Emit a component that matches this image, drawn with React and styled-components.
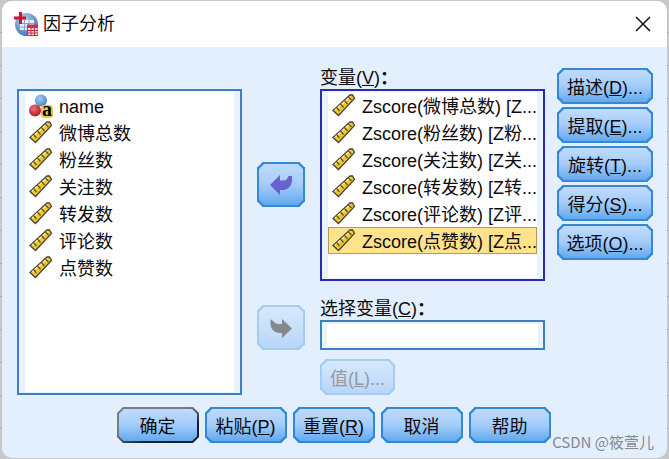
import { useState } from "react";
import styled, { createGlobalStyle } from "styled-components";

const GlobalStyle = createGlobalStyle`
  * {
    box-sizing: border-box;
  }

  body {
    margin: 0;
    background-color: #c6c8cb;
    font-family: "Liberation Sans", "Noto Sans CJK SC", sans-serif;
    font-size: 18px;
    line-height: 22px;
    color: #0b0b10;
  }
`;

const Page = styled.div`
  padding: 1px 2px;
  background: repeating-linear-gradient(#c6c8cb 0 32px, #a9acb3 32px 33px);
`;

const Dialog = styled.section`
  position: relative;
  background-color: #e3effc;
  border-radius: 10px;
  overflow: hidden;
`;

const TitleBar = styled.header`
  display: flex;
  align-items: center;
  gap: 5px;
  height: 46px;
  padding: 0 12px;
  background-color: white;

  h1 {
    flex: 1;
    margin: 0;
    font-size: 18px;
    font-weight: normal;
  }
`;

const CloseButton = styled.button`
  display: flex;
  padding: 4px;
  border: none;
  background: transparent;
  cursor: pointer;
`;

const Content = styled.div`
  display: grid;
  grid-template-columns: minmax(0, 1fr) 78px minmax(0, 1fr) 108px;
  padding: 20px 14px 0 15px;
`;

const Column = styled.div`
  display: flex;
  flex-direction: column;
`;

const SourceColumn = styled(Column)`
  padding-top: 22px;
`;

const TransferColumn = styled(Column)`
  gap: 98px;
  padding: 95px 15px 0;
`;

const OptionsColumn = styled(Column)`
  gap: 3px;
  padding: 1px 0 0 12px;
`;

const FieldLabel = styled.label`
  display: block;
  height: 22px;
  line-height: 22px;
`;

const ListBox = styled.ul`
  flex: ${(props) => (props.$fill ? 1 : "none")};
  min-height: 192px;
  margin: 0;
  padding: 1px 6px;
  list-style: none;
  border: 2px solid ${(props) => (props.$focused ? "#2a2cab" : "#3b7fc4")};
  background: linear-gradient(white, white) content-box, #e9f3fe;
  outline: none;
`;

const ListItem = styled.li`
  display: flex;
  align-items: center;
  gap: 6px;
  height: 27px;
  padding: 0 2px 0 3px;
  border: 1px solid ${(props) => (props.$selected ? "#b39b55" : "transparent")};
  background-color: ${(props) => (props.$selected ? "#ffe28c" : "transparent")};
  white-space: nowrap;
  cursor: default;

  svg {
    flex: none;
    overflow: visible;
  }

  span {
    padding-top: 2px;
  }
`;

const TextField = styled.input`
  width: 100%;
  height: 30px;
  padding: 2px 5px;
  border: 2px solid #3b7fc4;
  border-radius: 0;
  background: linear-gradient(white, white) content-box, #e9f3fe;
  font: inherit;
  outline: none;
`;

const Button = styled.button`
  display: flex;
  justify-content: center;
  align-items: center;
  height: 36px;
  padding: 3px 0 0;
  border: 2px solid #3388d8;
  border-radius: 6px;
  corner-shape: bevel;
  background: linear-gradient(#c0dcfd, #a4ccfa 50%, #62a9ee);
  color: inherit;
  font: inherit;
  white-space: nowrap;
  cursor: pointer;

  &:disabled {
    border-color: #a3cdf3;
    background: linear-gradient(#d5e7fc, #c9e0fb 50%, #b7d6f8);
    color: #96999f;
    cursor: default;
  }
`;

const ArrowButton = styled(Button)`
  height: 45px;
  padding: 0;
`;

const DefaultButton = styled(Button)`
  border-color: transparent;
  background: linear-gradient(#c0dcfd, #a4ccfa 50%, #62a9ee) padding-box,
    linear-gradient(160deg, #777b82 40%, #0d2034 70%) border-box;
`;

const ValueButton = styled(Button)`
  width: 75px;
  margin-top: 9px;
`;

const FilterField = styled.div`
  margin-top: 17px;
`;

const Footer = styled.footer`
  display: grid;
  grid-template-columns: repeat(5, 82px);
  justify-content: center;
  gap: 6px;
  padding: 12px 2px 15px 0;
`;

const Watermark = styled.span`
  position: absolute;
  right: 13px;
  bottom: 5px;
  font-family: "Noto Sans CJK SC", sans-serif;
  font-size: 15px;
  color: #85898f;
`;

function AppIcon() {
  return (
    <svg width="24" height="24" viewBox="0 0 24 24" aria-hidden="true">
      <defs>
        <radialGradient id="globe" cx="0.4" cy="0.3" r="0.75">
          <stop offset="0" stopColor="#b9d5ee" />
          <stop offset="1" stopColor="#3d72ad" />
        </radialGradient>
      </defs>
      <circle cx="12.5" cy="12.5" r="11.5" fill="url(#globe)" />
      <path d="M6 8h14v10H6z" fill="#e6f0f9" />
      <path
        d="M6 11.5h14M6 15h14M10.5 8v10M15 8v10"
        stroke="#7fa8d0"
        fill="none"
      />
      <path d="M5 0h3v4.500h4v3H8V12H5V7.500H0v-3h5z" fill="#d3122d" />
      <path d="M13 12.500h11V24H13z" fill="#cb3147" />
      <path
        d="M14 16h2.500v2H14zM17.500 16H20v2h-2.500zM21 16h2.500v2H21zM14 19h2.500v1.500H14zM17.500 19H20v1.500h-2.500zM21 19h2.500v1.500H21zM14 21.500h2.500V23H14zM17.500 21.500H20V23h-2.500zM21 21.500h2.500V23H21z"
        fill="#f7d5d9"
      />
    </svg>
  );
}

// Continuous (scale) variable
function RulerIcon() {
  return (
    <svg width="24" height="24" viewBox="0 0 24 24" aria-hidden="true">
      <path
        d="M1 16.500 18 1h2.500l2 3.500L6.500 21.500z"
        fill="#efc62f"
        stroke="#44443a"
        strokeWidth="1.300"
      />
      <path d="M3 16 18.500 2.500" stroke="#fff0a0" strokeWidth="1.200" />
      <path
        d="M4.500 13.500l3 3.500M8.500 10l3 3.500M12.500 6.500l3 3.500M16.500 3l3 3"
        stroke="#5b5220"
        strokeWidth="1.200"
      />
    </svg>
  );
}

// Nominal string variable
function NominalIcon() {
  return (
    <svg width="24" height="24" viewBox="0 0 24 24" aria-hidden="true">
      <defs>
        <radialGradient id="blueBall" cx="0.4" cy="0.35" r="0.65">
          <stop offset="0" stopColor="#a5cbf3" />
          <stop offset="1" stopColor="#4c86c9" />
        </radialGradient>
        <radialGradient id="redBall" cx="0.4" cy="0.35" r="0.65">
          <stop offset="0" stopColor="#ef7278" />
          <stop offset="1" stopColor="#b51624" />
        </radialGradient>
      </defs>
      <circle cx="12" cy="6.500" r="6" fill="url(#blueBall)" />
      <circle cx="6" cy="16.500" r="6" fill="url(#redBall)" />
      <path d="M14 11h8l2 2v9l-2 2h-8l-2-2v-9z" fill="#f2cb3c" />
      <text
        x="18"
        y="22"
        textAnchor="middle"
        fontFamily="Liberation Serif, serif"
        fontSize="20"
        fontWeight="bold"
        fill="#000"
      >
        a
      </text>
    </svg>
  );
}

function BackArrow() {
  return (
    <svg width="22" height="20" viewBox="0 0 22 20" aria-hidden="true">
      <path
        d="M0 10 10 0v5.500h3.500c3 0 4-2 5-4.500H22v4c0 6-4.500 10-9.500 10H10v5z"
        fill="#6a61cf"
      />
    </svg>
  );
}

function ForwardArrow() {
  return (
    <svg width="22" height="20" viewBox="0 0 22 20" aria-hidden="true">
      <path
        d="M22 10.500 12 20v-5H9.500C4.500 15 .5 11 .5 5.500V1.500c3 .5 4 4.500 7.500 4.500h4V1z"
        fill="#85888c"
      />
    </svg>
  );
}

const sourceVariables = [
  { name: "name", nominal: true },
  { name: "微博总数" },
  { name: "粉丝数" },
  { name: "关注数" },
  { name: "转发数" },
  { name: "评论数" },
  { name: "点赞数" },
];

const targetVariables = [
  "Zscore(微博总数) [Z...",
  "Zscore(粉丝数) [Z粉...",
  "Zscore(关注数) [Z关...",
  "Zscore(转发数) [Z转...",
  "Zscore(评论数) [Z评...",
  "Zscore(点赞数) [Z点...",
];

const optionButtons = [
  { text: "描述", shortcut: "D" },
  { text: "提取", shortcut: "E" },
  { text: "旋转", shortcut: "T" },
  { text: "得分", shortcut: "S" },
  { text: "选项", shortcut: "O" },
];

function App() {
  const [selected, setSelected] = useState(5);
  const [filter, setFilter] = useState("");

  return (
    <Page>
      <GlobalStyle />
      <Dialog role="dialog" aria-labelledby="dialogTitle">
        <TitleBar>
          <AppIcon />
          <h1 id="dialogTitle">因子分析</h1>
          <CloseButton type="button" aria-label="关闭">
            <svg width="16" height="16" viewBox="0 0 16 16">
              <path
                d="M1 1l14 14M15 1 1 15"
                stroke="#111"
                strokeWidth="1.500"
                fill="none"
              />
            </svg>
          </CloseButton>
        </TitleBar>
        <Content>
          <SourceColumn>
            <ListBox $fill role="listbox" aria-label="源变量" tabIndex={0}>
              {sourceVariables.map((variable) => (
                <ListItem key={variable.name} role="option">
                  {variable.nominal ? <NominalIcon /> : <RulerIcon />}
                  <span>{variable.name}</span>
                </ListItem>
              ))}
            </ListBox>
          </SourceColumn>
          <TransferColumn>
            <ArrowButton type="button" aria-label="移回变量">
              <BackArrow />
            </ArrowButton>
            <ArrowButton type="button" disabled aria-label="移入选择变量">
              <ForwardArrow />
            </ArrowButton>
          </TransferColumn>
          <Column>
            <FieldLabel as="span" id="variablesLabel">
              变量(<u>V</u>)<b>：</b>
            </FieldLabel>
            <ListBox
              $focused
              role="listbox"
              aria-labelledby="variablesLabel"
              tabIndex={0}
            >
              {targetVariables.map((name, index) => (
                <ListItem
                  key={name}
                  role="option"
                  aria-selected={index === selected}
                  $selected={index === selected}
                  onClick={() => setSelected(index)}
                >
                  <RulerIcon />
                  <span>{name}</span>
                </ListItem>
              ))}
            </ListBox>
            <FilterField>
              <FieldLabel htmlFor="filterVariable">
                选择变量(<u>C</u>)<b>：</b>
              </FieldLabel>
              <TextField
                type="text"
                id="filterVariable"
                value={filter}
                onChange={(e) => setFilter(e.target.value)}
              />
            </FilterField>
            <ValueButton type="button" disabled>
              值(<u>L</u>)...
            </ValueButton>
          </Column>
          <OptionsColumn>
            {optionButtons.map(({ text, shortcut }) => (
              <Button key={shortcut} type="button">
                {text}(<u>{shortcut}</u>)...
              </Button>
            ))}
          </OptionsColumn>
        </Content>
        <Footer>
          <DefaultButton type="submit">确定</DefaultButton>
          <Button type="button">
            粘贴(<u>P</u>)
          </Button>
          <Button type="button">
            重置(<u>R</u>)
          </Button>
          <Button type="button">取消</Button>
          <Button type="button">帮助</Button>
        </Footer>
        <Watermark>CSDN @筱萱儿</Watermark>
      </Dialog>
    </Page>
  );
}

export default App;
